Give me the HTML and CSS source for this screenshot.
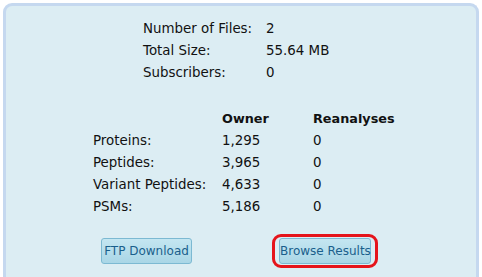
FILE: index.html
```html
<!DOCTYPE html>
<html>
<head>
<meta charset="utf-8">
<link rel="stylesheet" href="styles.css">
</head>
<body>
<div class="panel">
  <table class="info">
    <tr><td class="lab1">Number of Files:</td><td>2</td></tr>
    <tr><td class="lab1">Total Size:</td><td>55.64 MB</td></tr>
    <tr><td class="lab1">Subscribers:</td><td>0</td></tr>
  </table>
  <table class="stats">
    <tr><th class="lab2"></th><th class="own">Owner</th><th>Reanalyses</th></tr>
    <tr><td class="lab2">Proteins:</td><td class="own">1,295</td><td>0</td></tr>
    <tr><td class="lab2">Peptides:</td><td class="own">3,965</td><td>0</td></tr>
    <tr><td class="lab2">Variant Peptides:</td><td class="own">4,633</td><td>0</td></tr>
    <tr><td class="lab2">PSMs:</td><td class="own">5,186</td><td>0</td></tr>
  </table>
  <div class="actions">
    <button class="btn btn-ftp">FTP Download</button>
    <span class="highlight"><button class="btn btn-browse">Browse Results</button></span>
  </div>
</div>
</body>
</html>
```
FILE: styles.css
```css
html, body {
  margin: 0;
  padding: 0;
  background: #ffffff;
}
body {
  padding: 3px 3px 0 3px;
  font-family: "DejaVu Sans", Verdana, sans-serif;
  font-size: 13.4px;
  color: #111;
}
.panel {
  background: #dcedf3;
  border: 3px solid #c5d8ef;
  border-bottom: none;
  border-radius: 9px 9px 0 0;
  height: 280px;
  box-sizing: border-box;
  padding-top: 11px;
}
table {
  border-collapse: collapse;
}
td, th {
  padding: 0;
  height: 22px;
  text-align: left;
  vertical-align: middle;
  white-space: nowrap;
}
th {
  font-weight: bold;
  font-size: 12.8px;
}
.info {
  margin-left: 137px;
}
.lab1 {
  width: 123px;
}
.stats {
  margin-left: 87px;
  margin-top: 24px;
}
.lab2 {
  width: 129px;
}
.own {
  width: 91px;
}
.actions {
  display: flex;
  align-items: center;
  margin-top: 17px;
  margin-left: 95px;
}
.btn {
  font-family: "DejaVu Sans", Verdana, sans-serif;
  font-size: 12px;
  color: #1a5f8c;
  background: linear-gradient(#c4e6f1, #a9d6e6);
  border: 1px solid #7cb9d2;
  border-radius: 3px;
  height: 26px;
  padding: 0;
  box-sizing: border-box;
  white-space: nowrap;
}
.btn-ftp {
  width: 91px;
}
.highlight {
  margin-left: 80px;
  border: 3px solid #e5141b;
  border-radius: 9px;
  padding: 1px 4px 1px 4px;
  display: inline-flex;
}
.btn-browse {
  width: 92px;
}
```
